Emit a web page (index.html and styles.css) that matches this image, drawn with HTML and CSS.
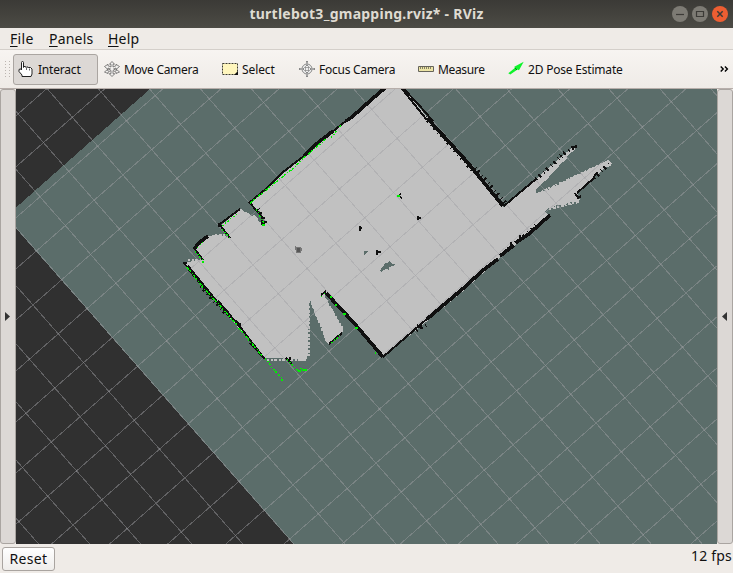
FILE: index.html
```html
<!DOCTYPE html>
<html lang="en">
<head>
<meta charset="utf-8">
<title>turtlebot3_gmapping.rviz* - RViz</title>
<link rel="stylesheet" href="styles.css">
</head>
<body>
<div class="window">
  <header class="titlebar">
    <h1 class="title">turtlebot3_gmapping.rviz* - RViz</h1>
    <div class="controls">
      <svg class="control" viewBox="0 0 16 16"><circle cx="8" cy="8" r="8"/><path d="M4 8.500h8"/></svg>
      <svg class="control" viewBox="0 0 16 16"><circle cx="8" cy="8" r="8"/><path d="M4.500 5.500h7v5h-7z"/></svg>
      <svg class="control close" viewBox="0 0 16 16"><circle cx="8" cy="8" r="8"/><path d="M5.300 5.300l5.400 5.400M10.700 5.300l-5.400 5.400"/></svg>
    </div>
  </header>
  <nav class="menubar">
    <span class="menu file"><u>F</u>ile</span>
    <span class="menu panels"><u>P</u>anels</span>
    <span class="menu help"><u>H</u>elp</span>
  </nav>
  <div class="toolbar">
    <svg class="grip" viewBox="0 0 5 17"><path d="M.5 0v17M4.500 0v17"/></svg>
    <div class="tool interact active">
      <svg class="icon" viewBox="0 0 16 16"><path d="M3.500 9V1.500q0-1 1-1t1 1V6.500l.500-1h1.500l.500 1 .500-.500h1.500l.500 1 .500-.500h1.500l1.500 1.500v5l-1 2.500h-9v-1.500l-3-3.500v-2l1-.500h1z" fill="#fff" stroke="#222"/><path d="M8.500 7v2M11.500 7.500v2" fill="none" stroke="#444" stroke-width=".8"/></svg>
      <span>Interact</span>
    </div>
    <div class="tool move">
      <svg class="icon" viewBox="0 0 16 16"><path d="M8 .5l2.500 2.700H9v2.800l3-1.300V3.300l3.500 2.200-3.500 3V7L9.500 8l3 1.500v-1l3 2.500-3.500 1.500v-1.500L9 9.500v3.200h1.800L8 15.500l-2.800-2.800H7V9.500L4 11v1.500L.5 11l3-2.500v1l3-1.500L4 7v1.500l-3.500-3L4 3.300v1.400L7 6V3.200H5.500z" fill="#f2f0ee" stroke="#555" stroke-width=".7"/></svg>
      <span>Move Camera</span>
    </div>
    <div class="tool select">
      <svg class="icon" viewBox="0 0 16 16"><path d="M.5 2.500h15v11H.5z" fill="#fff6bd" stroke="#3a3a32" stroke-dasharray="2 1"/><path d="M16 10v4h-4z" fill="#111"/></svg>
      <span>Select</span>
    </div>
    <div class="tool focus">
      <svg class="icon" viewBox="0 0 16 16"><circle cx="8" cy="8" r="5" fill="#eee" stroke="#888"/><path d="M8 0v5M8 11v5M0 8h5M11 8h5" stroke="#888" stroke-width="2"/><path d="M8 1v3M8 12v3M1 8h3M12 8h3" stroke="#ddd" stroke-width=".7"/><path d="M5 6.500h6M5 9.500h6M6.500 5v6M9.500 5v6" stroke="#888" stroke-width=".7"/></svg>
      <span>Focus Camera</span>
    </div>
    <div class="tool measure">
      <svg class="icon" viewBox="0 0 16 16"><path d="M.5 5.500h15v5H.5z" fill="#ece4a5" stroke="#66645a"/><path d="M2.500 6v2M4.500 6v2M6.500 6v2M8.500 6v2M10.500 6v2M12.500 6v2" stroke="#858164"/></svg>
      <span>Measure</span>
    </div>
    <div class="tool pose">
      <svg class="icon" viewBox="0 0 16 16"><path d="M.3 12.200L6.800 7l-.5-1.200L15.700.8 11 9.200 9.500 8.500 2.300 13.600z" fill="#0ff32b"/><path d="M7 7l2 2" stroke="#087b18"/></svg>
      <span>2D Pose Estimate</span>
    </div>
    <svg class="more" viewBox="0 0 9 6"><path d="M.7.5L3.200 3 .7 5.500M4.900.5L7.400 3 4.900 5.500"/></svg>
  </div>
  <main class="workspace">
    <div class="splitter left"><svg viewBox="0 0 5 9"><path d="M0 0l5 4.500L0 9z"/></svg></div>
    <svg class="viewport" viewBox="16 89 701 455">
      <rect class="void" x="16" y="89" width="701" height="455"/>
      <path class="unknown" d="M150 89L16 207.500V228.500L293.500 544H717V89z"/>
      <!-- free space -->
      <path class="free" d="M385 89H404L428 118 475 171 503 207 516 196 537 178 560 158 573 147 576 149 568 155 566 160 560 164 558 168 551 174 548 179 541 184 536 190 536 193 543 191 548 190 552 187 558 185 561 182 568 180 572 177 579 174 585 172 590 168 597 166 604 162 608 160 612 163 611 166 604 168 598 174 577 193 580 200 577 202 571 202 564 205 557 205 552 208 548 208 545 212 550 215 533 231 502 256 462 292 420 327 383 357 326 292 325 298 328 301 330 307 333 310 335 315 338 320 340 325 343 328 343 332 329 344 326 342 324 334 321 326 317 319 315 312 312 305 310 299 309 308 309 321 308 334 308 355 306 361 301 361 300 359 288 359 278 358 265 358 230 318 216 301 185 264 188 262 194 261 200 260 203 260 194 249 208 236 215 235 222 236 229 237 220 226 241 209 245 212 248 213 251 216 254 215 258 219 259 223 263 224 265 221 250 202 333 131 371 99z"/>
      <path class="fray" d="M541 192L604 163M549 209L579 202M325 299L343 329M327 342L311 302M309 306V356M202 260H188M215 235H230M241 211L263 225M305 360H267"/>
      <path class="unknown" d="M380 271l2-4 2-1 1-3h2l2-2 2 2 2 1h2l-2 3-1-1-3 1v3l-3-1-3 1-2 2zM364 251h5l-3 2-2 3zM256 213l4-2 4 8-3 1z"/>
      <!-- metric grid: one unit per cell -->
      <g class="grid" transform="matrix(25.31 28.82 -28.82 25.31 72.3 117.3)">
        <path d="M-2-14V10M-1-14V10M0-14V10M1-14V10M2-14V10M3-14V10M4-14V10M5-14V10M6-14V10M7-14V10M8-14V10M9-14V10M10-14V10M11-14V10M12-14V10M13-14V10M14-14V10M15-14V10M16-14V10M17-14V10M18-14V10M19-14V10"/>
        <path d="M-3-13H21M-3-12H21M-3-11H21M-3-10H21M-3-9H21M-3-8H21M-3-7H21M-3-6H21M-3-5H21M-3-4H21M-3-3H21M-3-2H21M-3-1H21M-3 0H21M-3 1H21M-3 2H21M-3 3H21M-3 4H21M-3 5H21M-3 6H21M-3 7H21M-3 8H21"/>
      </g>
      <!-- occupied cells -->
      <path class="wall thick" d="M385 88L371 100 352 117 346 121M333 131L315 145 304 156M427 118L450 143 469 164 481 179 503 206M550 215L530 233 517 242M513 246L500 256M498 259L482 271 466 286 447 302 427 319M326 293L354 323 383 357M208 236L200 242 194 249M187 266L205 288 214 299M217 301L231 317"/>
      <path class="wall" d="M346 121L332 132M304 156L283 172 267 188 249 203M404 89L418 104 433 121M402 89L427 120M249 202L264 219M240 209L220 224M220 225L230 238M194 248L203 260M184 263L196 278M203 286L232 318M231 317L241 328 263 357M250 343L265 359M286 358L292 364M290 357V360M329 344L342 333M321 295L326 291M428 318L383 357M504 206L518 194 536 179M577 193L594 178"/>
      <path class="wall speck" d="M536 179L562 156M560 156L574 147M594 178L609 164M475 168L507 205M505 252L537 225M426 325L416 331M258 209L266 224M425 117L474 172M201 286L225 313"/>
      <path class="wall" d="M571 147h5v-2M575 193l3 5 3-2M594 177l3-5M418 216v4M417 218h4M377 250v5M376 252h5M360 226v5M359 228h3M399 195l2-1M400 197l2 1M219 223v4M183 263h4M237 322l4 3M232 318l5 4M262 220v5M520 239v-4M511 247v-5M417 325l4 3"/>
      <path class="debris" d="M296 247h4v5h-4zM295 246v4M301 248v3"/>
      <!-- laser returns -->
      <path class="scan dense" d="M250 203L276 182 295 167 306 155M308 154L326 139M187 267L202 286 221 307 237 325M239 328L263 357"/>
      <path class="scan" d="M222 229L230 238M222 226L238 213M195 251L204 262M197 248L205 240M265 358L275 371 283 380M287 359L299 372 301 368 304 370M306 371V368M331 343L341 335M321 297L326 292M331 138L342 124M256 209L265 225"/>
      <path class="scan solid" d="M397 196h3M262 225h3M343 314h3M355 328h3M202 262h2M330 297h2M335 305h2M375 353h1M282 379v2M276 371v2M298 371h3M302 370h4"/>
    </svg>
    <div class="splitter right"><svg viewBox="0 0 5 9"><path d="M5 0L0 4.500 5 9z"/></svg></div>
  </main>
  <footer class="statusbar">
    <button class="reset">Reset</button>
    <span class="fps">12 fps</span>
  </footer>
</div>
</body>
</html>
```

FILE: styles.css
```css
* { box-sizing: border-box; }
body { margin: 0; overflow: hidden; font-family: "Noto Sans", "Open Sans", sans-serif; color: #111; }
.window { width: 733px; height: 573px; display: flex; flex-direction: column; background: #efebe7; }
.titlebar { height: 28px; flex: none; display: grid; grid-template-columns: 61px 1fr 61px; align-items: center; background: linear-gradient(#3b3a36, #4c4b45); }
.title { grid-column: 2; margin: 0; text-align: center; font-size: 14px; line-height: 28px; font-weight: 700; letter-spacing: .25px; color: #dfdbd2; white-space: nowrap; }
.controls { display: flex; gap: 4px; }
.control { width: 16px; height: 16px; fill: #7d7b74; stroke: none; }
.control path { fill: none; stroke: #3c3b37; stroke-width: 1.2; }
.control.close { fill: #ed5e32; }
.control.close path { stroke-width: 1.5; }

.menubar { height: 22px; flex: none; display: flex; padding-left: 10px; border-bottom: 1px solid #d4cfca; font-size: 14px; line-height: 22px; white-space: nowrap; }
.menu { flex: none; }
.menu u { text-underline-offset: 2px; }
.file { width: 39px; letter-spacing: .3px; }
.panels { width: 59px; letter-spacing: .2px; }
.help { letter-spacing: .2px; }

.toolbar { height: 39px; flex: none; display: flex; align-items: center; padding-left: 5px; padding-right: 4px; background: linear-gradient(#f7f4f1, #efebe7); border-bottom: 1px solid #b7aeaa; box-shadow: inset 0 -1px #efebe7; font-size: 12px; }
.grip { width: 5px; height: 17px; margin-right: 3px; fill: none; stroke: #bbb5b0; stroke-dasharray: 1 2; }
.tool { flex: none; height: 31px; display: flex; align-items: center; gap: 4px; padding-left: 4px; border: 1px solid transparent; border-radius: 3px; white-space: nowrap; }
.tool.active { background: #dcd8d5; border-color: #aaa5a1; }
.icon { width: 16px; height: 16px; flex: none; }
.interact { width: 85px; letter-spacing: -.2px; }
.move { width: 119px; padding-left: 5px; letter-spacing: -.3px; }
.select { width: 77px; letter-spacing: -.1px; }
.focus { width: 119px; letter-spacing: -.25px; }
.measure { width: 90px; letter-spacing: -.35px; }
.pose { width: 130px; letter-spacing: -.2px; }
.more { width: 9px; height: 6px; margin-left: auto; fill: none; stroke: #000; stroke-width: 1.4; }

.workspace { height: 455px; flex: none; display: grid; grid-template-columns: 16px 701px 16px; }
.splitter { display: flex; align-items: center; background: #dcd8d5; border: 1px solid #aaa5a1; border-radius: 3px; }
.splitter svg { width: 5px; height: 9px; fill: #333; }
.left { padding-left: 4px; }
.right { padding-left: 4px; }
.viewport { display: block; width: 701px; height: 455px; shape-rendering: crispEdges; }
.void { fill: #303030; }
.unknown { fill: #5b6d6a; }
.free { fill: #c1c1c1; }
.fray { fill: none; stroke: #c1c1c1; stroke-width: 2; stroke-dasharray: 2 2 3 1; }
.grid path { fill: none; stroke: rgba(160, 160, 164, .45); stroke-width: 1; vector-effect: non-scaling-stroke; }
.wall { fill: none; stroke: #101010; stroke-width: 2; }
.wall.thick { stroke-width: 3.6; }
.wall.speck { stroke-width: 4; stroke-dasharray: 1 3 2 4; }
.debris { fill: #555; stroke: #777; stroke-width: 1; }
.scan { fill: none; stroke: #00f000; stroke-width: 1.3; stroke-dasharray: 2 2 1 2; }
.scan.dense { stroke-width: 1.5; stroke-dasharray: 3 1 2 2 1 1; }
.scan.solid { stroke-width: 2; stroke-dasharray: none; }

.statusbar { height: 29px; flex: none; display: flex; align-items: flex-start; justify-content: space-between; padding: 3px 1px 0 2px; font-size: 14px; }
.reset { width: 53px; height: 24px; padding: 0; border: 1px solid #a9a4a0; border-radius: 3px; background: linear-gradient(#fff, #efedeb); color: #111; font: inherit; line-height: 22px; letter-spacing: .3px; }
.fps { line-height: 18px; letter-spacing: .2px; }
```
